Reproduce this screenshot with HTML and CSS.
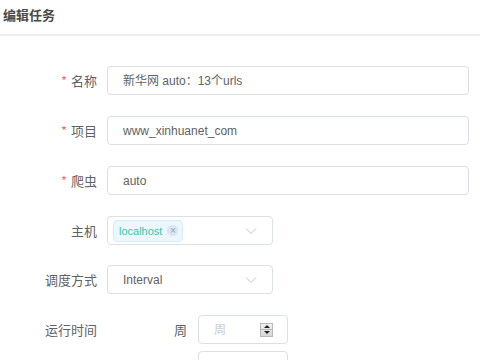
FILE: index.html
```html
<!DOCTYPE html>
<html lang="zh-CN">
<head>
  <meta charset="UTF-8">
  <title>编辑任务</title>
  <link rel="stylesheet" href="styles.css">
</head>
<body>
  <div class="head">编辑任务</div>
  <div class="form">
    <div class="item">
      <label class="label"><em>*</em>名称</label>
      <div class="input">新华网 auto：13个urls</div>
    </div>
    <div class="item">
      <label class="label"><em>*</em>项目</label>
      <div class="input">www_xinhuanet_com</div>
    </div>
    <div class="item">
      <label class="label"><em>*</em>爬虫</label>
      <div class="input">auto</div>
    </div>
    <div class="item">
      <label class="label">主机</label>
      <div class="input select">
        <span class="tag">localhost<i>×</i></span>
        <svg class="arrow" width="12" height="8" viewBox="0 0 12 8"><path d="M1 1.5 L6 6.5 L11 1.5" fill="none" stroke="#c0c4cc" stroke-width="1"/></svg>
      </div>
    </div>
    <div class="item">
      <label class="label">调度方式</label>
      <div class="input select">
        <span class="val">Interval</span>
        <svg class="arrow" width="12" height="8" viewBox="0 0 12 8"><path d="M1 1.5 L6 6.5 L11 1.5" fill="none" stroke="#c0c4cc" stroke-width="1"/></svg>
      </div>
    </div>
    <div class="item">
      <label class="label">运行时间</label>
      <div class="sub">
        <div class="subrow">
          <label class="sublabel">周</label>
          <div class="input num"><span class="ph">周</span><span class="spin"><b class="up"></b><b class="down"></b></span></div>
        </div>
        <div class="subrow">
          <label class="sublabel"></label>
          <div class="input num"></div>
        </div>
      </div>
    </div>
  </div>
</body>
</html>
```

FILE: styles.css
```css
*{
  margin: 0;
  padding: 0;
  box-sizing: border-box;
}
html,body{
  width: 100%;
  height: 100%;
  overflow: hidden;
  background: #fff;
  font-family: "Noto Sans CJK SC", "Noto Sans", sans-serif;
  font-size: 13px;
  color: #606266;
}
.head{
  height: 36px;
  line-height: 30px;
  padding-left: 3px;
  font-weight: bold;
  color: #4a4a4a;
  border-bottom: 2px solid #ededed;
}
.form{
  padding-top: 30px;
}
.item{
  display: flex;
  align-items: flex-start;
  margin-bottom: 21px;
}
.item:nth-child(4){
  margin-bottom: 20px;
}
.label{
  width: 107px;
  padding-right: 10px;
  text-align: right;
  line-height: 29px;
  color: #606266;
}
.label em{
  font-style: normal;
  color: #f56c6c;
  margin-right: 4px;
}
.input{
  width: 362px;
  height: 29px;
  line-height: 28px;
  padding: 0 15px;
  border: 1px solid #dcdfe6;
  border-radius: 4px;
  color: #606266;
  font-family: "Liberation Sans", "Noto Sans CJK SC", sans-serif;
  font-size: 12px;
}
.select{
  width: 166px;
  display: flex;
  align-items: center;
  padding: 0 5px;
}
.select .val{
  padding-left: 10px;
  flex: 1;
}
.select .arrow{
  margin-left: auto;
  margin-right: 10px;
}
.tag{
  display: flex;
  align-items: center;
  height: 22px;
  padding: 0 4px 0 5px;
  background: #ecf6fd;
  border: 1px solid #d9ecf8;
  border-radius: 4px;
  color: #42c5a0;
  font-size: 11px;
  line-height: 20px;
}
.tag i{
  font-style: normal;
  display: inline-block;
  width: 11px;
  height: 11px;
  line-height: 11px;
  margin-left: 5px;
  text-align: center;
  border-radius: 50%;
  background: #dfe4ea;
  color: #6fa8e6;
  font-size: 10px;
}
.sub{
  display: flex;
  flex-direction: column;
  gap: 7px;
}
.subrow{
  display: flex;
}
.sublabel{
  width: 91px;
  padding-right: 11px;
  text-align: right;
  line-height: 29px;
}
.num{
  width: 90px;
  display: flex;
  align-items: center;
  padding: 0 14px 0 15px;
}
.ph{
  flex: 1;
  color: #c8cbd1;
}
.spin{
  display: flex;
  flex-direction: column;
  width: 13px;
  height: 14px;
  border: 1px solid #b8b8b8;
  background: linear-gradient(#f2f2f2, #d6d6d6);
}
.spin b{
  flex: 1;
  display: flex;
  align-items: center;
  justify-content: center;
}
.spin .up{
  border-bottom: 1px solid #b8b8b8;
}
.spin .up::after{
  content: "";
  border-left: 3px solid transparent;
  border-right: 3px solid transparent;
  border-bottom: 3px solid #222;
}
.spin .down::after{
  content: "";
  border-left: 3px solid transparent;
  border-right: 3px solid transparent;
  border-top: 3px solid #222;
}
```
